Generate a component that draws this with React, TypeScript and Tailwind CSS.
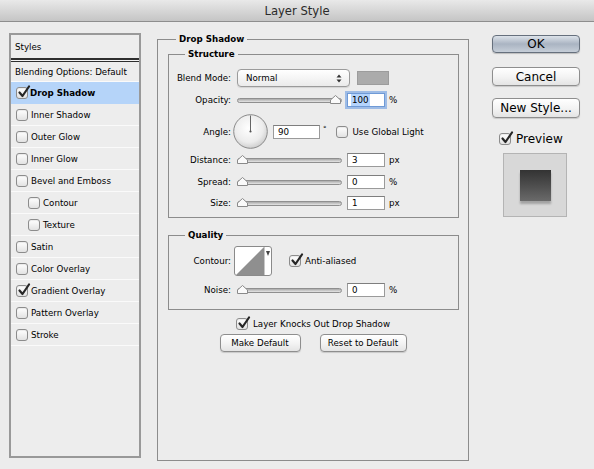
import React from "react";

const Check = ({ checked = false }: { checked?: boolean }) => (
  <span className="relative block w-[12px] h-[12px] shrink-0 rounded-[3px] border border-[#8c8c8c] bg-gradient-to-b from-white to-[#e2e2e2] shadow-[inset_0_1px_1px_rgba(0,0,0,0.08)]">
    {checked && (
      <svg className="absolute left-[0px] top-[-3px]" width="14" height="14" viewBox="0 0 14 14">
        <path d="M2.5 7.5 L5.5 11 L12 1.5" fill="none" stroke="#262626" strokeWidth="2.2" strokeLinecap="round" strokeLinejoin="round" />
      </svg>
    )}
  </span>
);

const Slider = ({ end = false }: { end?: boolean }) => (
  <div className="relative w-[105px] h-[14px] shrink-0 flex items-center">
    <div className="w-full h-[5px] rounded-full border border-[#8f8f8f] bg-gradient-to-b from-[#a9a9a9] to-[#e6e6e6]" />
    <svg className={end ? "absolute top-[2px] right-[1px]" : "absolute top-[2px] left-[0px]"} width="11" height="9" viewBox="0 0 11 9">
      <path d="M0.5 8.5 V5 L5.5 0.5 L10.5 5 V8.5 Z" fill="#fafafa" stroke="#8a8a8a" />
    </svg>
  </div>
);

const Field = ({ value, w = "w-[38px]", focus = false }: { value: string; w?: string; focus?: boolean }) => (
  <div
    className={
      focus
        ? `${w} h-[14px] shrink-0 bg-white border border-[#6f9ad6] shadow-[0_0_0_2px_rgba(125,168,228,0.7)] pl-[3px] flex items-center`
        : `${w} h-[14px] shrink-0 bg-white border border-[#9a9a9a] border-t-[#7e7e7e] pl-[4px] flex items-center`
    }
  >
    <span className={focus ? "bg-[#b4d4fd] px-[1px] leading-[12px]" : "leading-[12px]"}>{value}</span>
  </div>
);

const Label = ({ children }: { children: React.ReactNode }) => (
  <div className="w-[62px] shrink-0 text-right">{children}</div>
);

const SliderRow = ({ label, value, unit, end, focus, cls }: { label: string; value: string; unit: string; end?: boolean; focus?: boolean; cls: string }) => (
  <div className={`${cls} h-[14px] flex items-center`}>
    <Label>{label}</Label>
    <div className="ml-[6px]">
      <Slider end={end} />
    </div>
    <div className="ml-[5px]">
      <Field value={value} focus={focus} />
    </div>
    <span className="ml-[4px]">{unit}</span>
  </div>
);

const MacButton = ({ children, w, h }: { children: React.ReactNode; w: string; h: string }) => (
  <button className={`${w} ${h} rounded-[4px] border border-[#8e8e8e] bg-gradient-to-b from-white via-[#f4f4f4] to-[#e4e4e4] shadow-[0_1px_1px_rgba(0,0,0,0.15)] flex items-center justify-center`}>
    {children}
  </button>
);

const styles: { name: string; checked?: boolean; indent?: boolean }[] = [
  { name: "Inner Shadow" },
  { name: "Outer Glow" },
  { name: "Inner Glow" },
  { name: "Bevel and Emboss" },
  { name: "Contour", indent: true },
  { name: "Texture", indent: true },
  { name: "Satin" },
  { name: "Color Overlay" },
  { name: "Gradient Overlay", checked: true },
  { name: "Pattern Overlay" },
  { name: "Stroke" },
];

export default function App() {
  return (
    <div className="w-[594px] h-[469px] overflow-hidden bg-[#ececec] text-black font-['DejaVu_Sans',sans-serif] text-[8.7px] leading-[14px]">
      <div className="h-[22px] bg-gradient-to-b from-[#e9e9e9] to-[#c5c5c5] border-b border-[#8e8e8e] flex items-center justify-center text-[11.6px] text-[#2a2a2a]">
        Layer Style
      </div>

      <div className="flex items-start pl-[9px] pt-[10px]">
        {/* styles list */}
        <div className="mt-[1px] w-[132px] h-[425px] shrink-0 border-2 border-[#999999] bg-[#ededed]">
          <div className="h-[23px] pl-[4px] flex items-center">Styles</div>
          <div className="h-[2px] bg-[#2e2e2e]" />
          <div className="h-[1px] bg-[#f4f4f4]" />
          <div className="h-[1px] bg-[#2e2e2e]" />
          <div className="h-[20px] pl-[4px] flex items-center border-b border-[#fafafa]">Blending Options: Default</div>
          <div className="h-[22px] pl-[5px] flex items-center gap-[2px] bg-[#b5d4f9] font-bold">
            <Check checked />
            <span>Drop Shadow</span>
          </div>
          {styles.map((s) => (
            <div
              key={s.name}
              className={
                s.indent
                  ? "h-[22px] pl-[17px] flex items-center gap-[3px] border-b border-[#fafafa]"
                  : "h-[22px] pl-[5px] flex items-center gap-[3px] border-b border-[#fafafa]"
              }
            >
              <Check checked={s.checked} />
              <span>{s.name}</span>
            </div>
          ))}
        </div>

        {/* main */}
        <fieldset className="ml-[16px] w-[312px] h-[429px] min-w-0 shrink-0 border border-[#8c8c8c]">
          <legend className="ml-[18px] px-[3px] font-bold leading-[14px]">Drop Shadow</legend>

          <fieldset className="mt-[1px] ml-[10px] mr-[9px] min-w-0 border border-[#8c8c8c] pb-[7px]">
            <legend className="ml-[16px] px-[3px] font-bold leading-[14px]">Structure</legend>

            <div className="mt-[8px] h-[18px] flex items-center">
              <Label>Blend Mode:</Label>
              <div className="ml-[6px] w-[113px] h-[18px] rounded-[4px] border border-[#9b9b9b] bg-gradient-to-b from-white to-[#ebebeb] shadow-[0_1px_1px_rgba(0,0,0,0.1)] flex items-center pl-[8px] pr-[7px] justify-between">
                <span>Normal</span>
                <svg width="6" height="9" viewBox="0 0 6 9">
                  <path d="M3 0.5 L5.5 3.5 H0.5 Z M3 8.5 L5.5 5.5 H0.5 Z" fill="#333" />
                </svg>
              </div>
              <div className="ml-[7px] w-[32px] h-[14px] bg-[#ababab] border border-[#9c9c9c]" />
            </div>

            <SliderRow cls="mt-[6px]" label="Opacity:" value="100" unit="%" end focus />

            <div className="mt-[7px] h-[35px] flex items-center">
              <Label>Angle:</Label>
              <svg className="ml-[2px] shrink-0" width="35" height="35" viewBox="0 0 35 35">
                <defs>
                  <radialGradient id="dial" cx="45%" cy="40%" r="60%">
                    <stop offset="0%" stopColor="#ffffff" />
                    <stop offset="70%" stopColor="#ececec" />
                    <stop offset="100%" stopColor="#cfcfcf" />
                  </radialGradient>
                </defs>
                <circle cx="17.5" cy="17.5" r="16.8" fill="url(#dial)" stroke="#8a8a8a" strokeWidth="1" />
                <line x1="17.5" y1="17.5" x2="17.5" y2="1.5" stroke="#666" strokeWidth="1" />
                <circle cx="17.5" cy="17.5" r="1.1" fill="#555" />
              </svg>
              <div className="ml-[5px]">
                <Field value="90" w="w-[47px]" />
              </div>
              <span className="ml-[3px] self-start mt-[8px] text-[7px]">°</span>
              <div className="ml-[9px]">
                <Check />
              </div>
              <span className="ml-[5px]">Use Global Light</span>
            </div>

            <SliderRow cls="mt-[4px]" label="Distance:" value="3" unit="px" />
            <SliderRow cls="mt-[8px]" label="Spread:" value="0" unit="%" />
            <SliderRow cls="mt-[7px]" label="Size:" value="1" unit="px" />
          </fieldset>

          <fieldset className="mt-[10px] ml-[10px] mr-[9px] min-w-0 border border-[#8c8c8c] pb-[12px]">
            <legend className="ml-[16px] px-[3px] font-bold leading-[14px]">Quality</legend>
            <div className="mt-[4px] h-[30px] flex items-center">
              <Label>Contour:</Label>
              <div className="ml-[3px] w-[38px] h-[30px] rounded-[3px] border border-[#8a8a8a] bg-white flex overflow-hidden">
                <svg width="29" height="28" viewBox="0 0 29 28" className="shrink-0">
                  <path d="M1 28 L29 0 V28 Z" fill="#8f8f8f" />
                </svg>
                <div className="flex-1 border-l border-[#c8c8c8] flex justify-center pt-[4px]">
                  <svg width="4" height="5" viewBox="0 0 4 5">
                    <path d="M0 0 H4 L2 5 Z" fill="#444" />
                  </svg>
                </div>
              </div>
              <div className="ml-[17px]">
                <Check checked />
              </div>
              <span className="ml-[4px]">Anti-aliased</span>
            </div>
            <SliderRow cls="mt-[7px]" label="Noise:" value="0" unit="%" />
          </fieldset>

          <div className="mt-[7px] h-[14px] flex items-center justify-center">
            <Check checked />
            <span className="ml-[5px]">Layer Knocks Out Drop Shadow</span>
          </div>
          <div className="mt-[3px] flex justify-center gap-[19px]">
            <MacButton w="w-[81px]" h="h-[18px]">Make Default</MacButton>
            <MacButton w="w-[87px]" h="h-[18px]">Reset to Default</MacButton>
          </div>
        </fieldset>

        {/* buttons */}
        <div className="ml-[23px] w-[88px] shrink-0 pt-[3px] flex flex-col text-[12px]">
          <button className="h-[18px] rounded-[4px] border border-[#66707d] bg-gradient-to-b from-[#dde3ea] via-[#aab4c2] to-[#c6ced8] shadow-[0_1px_1px_rgba(0,0,0,0.2)] flex items-center justify-center">
            OK
          </button>
          <div className="mt-[14px]">
            <MacButton w="w-full" h="h-[19px]">Cancel</MacButton>
          </div>
          <div className="mt-[12px]">
            <MacButton w="w-full" h="h-[20px]">New Style...</MacButton>
          </div>
          <div className="mt-[14px] h-[14px] pl-[7px] flex items-center">
            <Check checked />
            <span className="ml-[5px]">Preview</span>
          </div>
          <div className="mt-[7px] ml-[11px] w-[64px] h-[64px] bg-[#d8d8d8] border border-[#b4b4b4] flex items-center justify-center">
            <div className="w-[31px] h-[31px] bg-gradient-to-b from-[#333333] to-[#6a6a6a] shadow-[0_3px_2px_rgba(0,0,0,0.25)]" />
          </div>
        </div>
      </div>
    </div>
  );
}
